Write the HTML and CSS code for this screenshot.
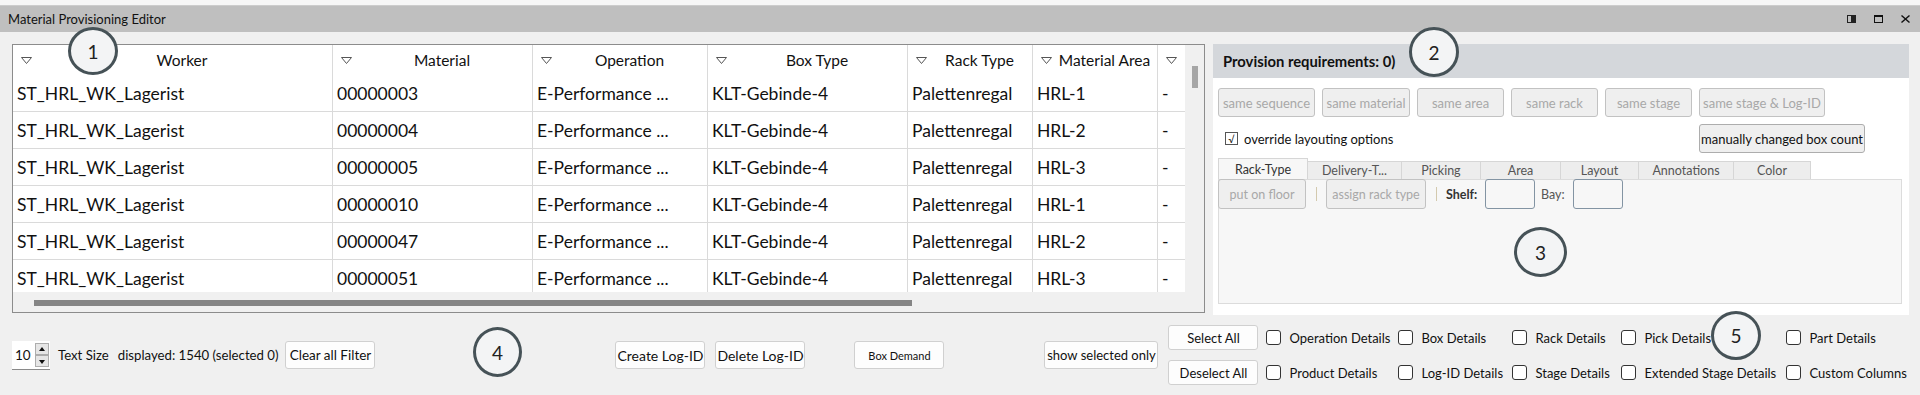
FILE: index.html
```html
<!DOCTYPE html>
<html lang="en">

<head>
    <meta charset="UTF-8">
    <title>Material Provisioning Editor</title>
    <link rel="stylesheet" href="styles.css">
</head>

<body>
    <div class="top-strip"></div>
    <div class="title-bar">
        <span class="title">Material Provisioning Editor</span>
        <div class="window-buttons">
            <svg width="9" height="8" viewBox="0 0 9 8"><rect x="0.5" y="0.5" width="8" height="7" fill="none" stroke="#222"/><rect x="4" y="0" width="5" height="8" fill="#222"/></svg>
            <svg width="9" height="8" viewBox="0 0 9 8"><rect x="0.5" y="1" width="8" height="6.5" fill="none" stroke="#111"/><rect x="0" y="0" width="9" height="2" fill="#111"/></svg>
            <svg width="9" height="8" viewBox="0 0 9 8"><path d="M0.5 0.5 L8.5 7.5 M8.5 0.5 L0.5 7.5" stroke="#111" stroke-width="1.4"/></svg>
        </div>
    </div>

    <div class="workspace">
        <div class="table-box">
            <div class="table-top">
                <div class="grid">
                    <div class="row head">
                        <div class="cell"><svg class="filter" width="11" height="7"><polygon points="0.5,0.5 10.5,0.5 5.5,6.5" /></svg><span>Worker</span></div>
                        <div class="cell"><svg class="filter" width="11" height="7"><polygon points="0.5,0.5 10.5,0.5 5.5,6.5" /></svg><span>Material</span></div>
                        <div class="cell"><svg class="filter" width="11" height="7"><polygon points="0.5,0.5 10.5,0.5 5.5,6.5" /></svg><span>Operation</span></div>
                        <div class="cell"><svg class="filter" width="11" height="7"><polygon points="0.5,0.5 10.5,0.5 5.5,6.5" /></svg><span>Box Type</span></div>
                        <div class="cell"><svg class="filter" width="11" height="7"><polygon points="0.5,0.5 10.5,0.5 5.5,6.5" /></svg><span>Rack Type</span></div>
                        <div class="cell"><svg class="filter" width="11" height="7"><polygon points="0.5,0.5 10.5,0.5 5.5,6.5" /></svg><span>Material Area</span></div>
                        <div class="cell"><svg class="filter" width="11" height="7"><polygon points="0.5,0.5 10.5,0.5 5.5,6.5" /></svg></div>
                    </div>
                    <div class="row">
                        <div class="cell">ST_HRL_WK_Lagerist</div><div class="cell">00000003</div><div class="cell">E-Performance ...</div><div class="cell">KLT-Gebinde-4</div><div class="cell">Palettenregal</div><div class="cell">HRL-1</div><div class="cell">-</div>
                    </div>
                    <div class="row">
                        <div class="cell">ST_HRL_WK_Lagerist</div><div class="cell">00000004</div><div class="cell">E-Performance ...</div><div class="cell">KLT-Gebinde-4</div><div class="cell">Palettenregal</div><div class="cell">HRL-2</div><div class="cell">-</div>
                    </div>
                    <div class="row">
                        <div class="cell">ST_HRL_WK_Lagerist</div><div class="cell">00000005</div><div class="cell">E-Performance ...</div><div class="cell">KLT-Gebinde-4</div><div class="cell">Palettenregal</div><div class="cell">HRL-3</div><div class="cell">-</div>
                    </div>
                    <div class="row">
                        <div class="cell">ST_HRL_WK_Lagerist</div><div class="cell">00000010</div><div class="cell">E-Performance ...</div><div class="cell">KLT-Gebinde-4</div><div class="cell">Palettenregal</div><div class="cell">HRL-1</div><div class="cell">-</div>
                    </div>
                    <div class="row">
                        <div class="cell">ST_HRL_WK_Lagerist</div><div class="cell">00000047</div><div class="cell">E-Performance ...</div><div class="cell">KLT-Gebinde-4</div><div class="cell">Palettenregal</div><div class="cell">HRL-2</div><div class="cell">-</div>
                    </div>
                    <div class="row">
                        <div class="cell">ST_HRL_WK_Lagerist</div><div class="cell">00000051</div><div class="cell">E-Performance ...</div><div class="cell">KLT-Gebinde-4</div><div class="cell">Palettenregal</div><div class="cell">HRL-3</div><div class="cell">-</div>
                    </div>
                </div>
                <div class="vscroll"><div class="vthumb"></div></div>
            </div>
            <div class="hscroll"><div class="hthumb"></div></div>
        </div>

        <div class="panel">
            <div class="panel-head">Provision requirements: 0)</div>
            <div class="panel-body">
                <div class="option-grid">
                    <button class="btn disabled">same sequence</button>
                    <button class="btn disabled">same material</button>
                    <button class="btn disabled">same area</button>
                    <button class="btn disabled">same rack</button>
                    <button class="btn disabled">same stage</button>
                    <button class="btn disabled last">same stage &amp; Log-ID</button>
                    <label class="check override"><span class="tick">&#x221A;</span>override layouting options</label>
                    <button class="btn box-count">manually changed box count</button>
                </div>
                <div class="tabs">
                    <div class="tab active" style="width: 90px">Rack-Type</div>
                    <div class="tab" style="width: 95px">Delivery-T...</div>
                    <div class="tab" style="width: 80px">Picking</div>
                    <div class="tab" style="width: 81px">Area</div>
                    <div class="tab" style="width: 79px">Layout</div>
                    <div class="tab" style="width: 96px">Annotations</div>
                    <div class="tab" style="width: 78px">Color</div>
                </div>
                <div class="tab-pane">
                    <div class="toolbar">
                        <button class="btn disabled floor">put on floor</button>
                        <span class="sep"></span>
                        <button class="btn disabled assign">assign rack type</button>
                        <span class="sep"></span>
                        <span class="shelf">Shelf:</span>
                        <input class="field" type="text">
                        <span class="bay">Bay:</span>
                        <input class="field" type="text">
                    </div>
                </div>
            </div>
        </div>
    </div>

    <div class="bottom">
        <div class="spinbox">
            <span class="spin-value">10</span>
            <div class="spin-arrows">
                <span class="arrow up"></span>
                <span class="arrow down"></span>
            </div>
        </div>
        <span class="size-label">Text Size</span>
        <span class="count-label">displayed: 1540 (selected 0)</span>
        <button class="btn light clear">Clear all Filter</button>
        <button class="btn light create">Create Log-ID</button>
        <button class="btn light delete">Delete Log-ID</button>
        <button class="btn light demand">Box Demand</button>
        <button class="btn light show">show selected only</button>
        <div class="select-col">
            <button class="btn light">Select All</button>
            <button class="btn light">Deselect All</button>
        </div>
        <div class="detail-grid">
            <label class="check"><span class="box"></span>Operation Details</label>
            <label class="check"><span class="box"></span>Box Details</label>
            <label class="check"><span class="box"></span>Rack Details</label>
            <label class="check"><span class="box"></span>Pick Details</label>
            <label class="check"><span class="box"></span>Part Details</label>
            <label class="check"><span class="box"></span>Product Details</label>
            <label class="check"><span class="box"></span>Log-ID Details</label>
            <label class="check"><span class="box"></span>Stage Details</label>
            <label class="check"><span class="box"></span>Extended Stage Details</label>
            <label class="check"><span class="box"></span>Custom Columns</label>
        </div>
    </div>

    <div class="marker m1">1</div>
    <div class="marker m2">2</div>
    <div class="marker m3">3</div>
    <div class="marker m4">4</div>
    <div class="marker m5">5</div>
</body>

</html>
```

FILE: styles.css
```css
body {
    margin: 0;
    width: 1920px;
    height: 395px;
    overflow: hidden;
    position: relative;
    background-color: #f0f0f0;
    font-family: 'Lato', 'Noto Sans', sans-serif;
    font-size: 13px;
    color: #111;
}

.top-strip {
    height: 5px;
    background-color: #f7f7f7;
    border-bottom: 1px solid #cdcdcd;
}

.title-bar {
    height: 26px;
    display: flex;
    align-items: center;
    padding: 0 10px 0 8px;
    background-color: #bfbfbf;
}

.title {
    flex: 1;
    font-size: 13px;
    color: #111;
}

.window-buttons {
    display: flex;
    align-items: center;
    gap: 18px;
}

.workspace {
    display: flex;
    align-items: flex-start;
    gap: 8px;
    height: 271px;
    padding: 12px 11px 0 12px;
}

/* table */
.table-box {
    width: 1193px;
    height: 269px;
    box-sizing: border-box;
    border: 1px solid #8c8c8c;
    display: flex;
    flex-direction: column;
    background-color: #f0f0f0;
}

.table-top {
    display: flex;
    height: 247px;
}

.grid {
    width: 1172px;
    overflow: hidden;
    background-color: #fff;
}

.row {
    display: grid;
    grid-template-columns: 320px 200px 175px 200px 125px 125px 27px;
    height: 37px;
    box-sizing: border-box;
    border-bottom: 1px solid #dadada;
    font-size: 17.5px;
}

.row.head {
    height: 30px;
    border-bottom: none;
    font-size: 15.5px;
}

.cell {
    display: flex;
    align-items: center;
    padding-left: 4px;
    border-right: 1px solid #dadada;
    white-space: nowrap;
    overflow: hidden;
}

.cell:last-child {
    border-right: none;
}

.head .cell {
    padding-left: 8px;
}

.head .cell span {
    flex: 1;
    text-align: center;
}

.filter polygon {
    fill: none;
    stroke: #555;
}

.vscroll {
    width: 19px;
}

.vthumb {
    width: 6px;
    height: 22px;
    margin: 21px 0 0 7px;
    background-color: #a6a6a6;
}

.hscroll {
    height: 20px;
}

.hthumb {
    width: 878px;
    height: 6px;
    margin: 8px 0 0 21px;
    background-color: #858585;
}

/* right panel */
.panel {
    width: 696px;
    height: 271px;
    background-color: #fff;
}

.panel-head {
    height: 34px;
    display: flex;
    align-items: center;
    padding-left: 10px;
    background-color: #d4d7db;
    font-size: 14.8px;
    font-weight: bold;
}

.panel-body {
    padding: 10px 7px 0 5px;
}

.option-grid {
    display: grid;
    grid-template-columns: 97px 88px 87px 87px 87px auto;
    grid-auto-rows: 29px;
    gap: 7px;
}

.btn {
    height: 29px;
    padding: 0;
    box-sizing: border-box;
    border: 1px solid #adadad;
    border-radius: 3px;
    background-color: #efefef;
    font-family: inherit;
    font-size: 13px;
    color: #111;
    white-space: nowrap;
}

.btn.disabled {
    color: #a8a8a8;
    border-color: #c2c2c2;
}

.btn.last {
    width: 126px;
}

.btn.box-count {
    width: 166px;
}

.check {
    display: flex;
    align-items: center;
    white-space: nowrap;
}

.override {
    grid-column: 1 / 6;
    padding-left: 7px;
}

.tick {
    width: 13px;
    height: 13px;
    box-sizing: border-box;
    margin-right: 6px;
    border: 1px solid #555;
    background-color: #fff;
    display: flex;
    align-items: center;
    justify-content: center;
    font-size: 10px;
}

.tabs {
    display: flex;
    align-items: flex-end;
    height: 21px;
    margin-top: 5px;
}

.tab {
    height: 18px;
    box-sizing: border-box;
    margin-right: -1px;
    display: flex;
    align-items: center;
    justify-content: center;
    border: 1px solid #d6d6d6;
    border-bottom: none;
    background-color: #ededed;
    font-size: 12.5px;
    color: #555;
}

.tab.active {
    height: 21px;
    background-color: #f7f7f7;
    color: #333;
}

.tab-pane {
    width: 684px;
    height: 125px;
    box-sizing: border-box;
    border: 1px solid #dcdcdc;
    background-color: #f7f7f7;
}

.toolbar {
    display: flex;
    align-items: center;
    height: 30px;
    margin: -1px 0 0 -1px;
}

.toolbar .btn {
    height: 30px;
    font-size: 12.5px;
}

.floor {
    width: 88px;
}

.assign {
    width: 100px;
}

.sep {
    width: 1px;
    height: 14px;
    margin: 0 9px 0 10px;
    background-color: #d3c9ae;
}

.shelf {
    width: 32px;
    margin-right: 7px;
    font-size: 12.5px;
    font-weight: bold;
    color: #333;
}

.bay {
    width: 25px;
    margin: 0 7px 0 6px;
    font-size: 12.5px;
    color: #555;
}

.field {
    width: 50px;
    height: 30px;
    box-sizing: border-box;
    border: 1px solid #8394a3;
    border-radius: 3px;
    background-color: transparent;
}

/* bottom bar */
.bottom {
    display: flex;
    align-items: center;
    height: 80px;
    padding-left: 12px;
    font-size: 13.2px;
}

.spinbox {
    width: 38px;
    height: 29px;
    box-sizing: border-box;
    display: flex;
    align-items: center;
    justify-content: space-between;
    background-color: #fff;
    border-bottom: 1px solid #8a8a8a;
}

.spin-value {
    padding-left: 3px;
    font-size: 13.5px;
}

.spin-arrows {
    display: flex;
    flex-direction: column;
    margin-right: 1px;
}

.arrow {
    width: 14px;
    height: 12px;
    box-sizing: border-box;
    border: 1px solid #adadad;
    background-color: #e6e6e6;
    position: relative;
}

.arrow::after {
    content: '';
    position: absolute;
    left: 3px;
    border-left: 3.5px solid transparent;
    border-right: 3.5px solid transparent;
}

.arrow.up::after {
    top: 3px;
    border-bottom: 4px solid #111;
}

.arrow.down::after {
    top: 4px;
    border-top: 4px solid #111;
}

.size-label {
    margin-left: 8px;
}

.count-label {
    margin-left: 9px;
}

.btn.light {
    width: 90px;
    height: 28px;
    border-color: #d0d0d0;
    background-color: #fdfdfd;
}

.btn.clear {
    margin-left: 7px;
    font-size: 13.5px;
}

.btn.create {
    margin-left: 240px;
    font-size: 14px;
}

.btn.delete {
    margin-left: 10px;
    font-size: 14px;
}

.btn.demand {
    margin-left: 49px;
    font-size: 11px;
}

.btn.show {
    width: 114px;
    margin-left: 100px;
}

.select-col {
    display: flex;
    flex-direction: column;
    gap: 10px;
    margin-left: 10px;
}

.select-col .btn {
    height: 25px;
}

.detail-grid {
    display: grid;
    grid-template-columns: 132px 114px 109px 165px auto;
    grid-auto-rows: 20px;
    row-gap: 15px;
    margin-left: 8px;
    font-size: 13px;
}

.box {
    width: 15px;
    height: 15px;
    box-sizing: border-box;
    margin-right: 8px;
    border: 1px solid #333;
    border-radius: 3px;
    background-color: #fff;
}

/* numbered callouts */
.marker {
    position: absolute;
    width: 50px;
    height: 50px;
    box-sizing: border-box;
    display: flex;
    align-items: center;
    justify-content: center;
    border: 3px solid #465257;
    border-radius: 50%;
    background-color: #f3f4f5;
    font-size: 19px;
    color: #222;
}

.m1 {
    left: 68px;
    top: 27px;
    height: 48px;
}

.m2 {
    left: 1409px;
    top: 27px;
}

.m3 {
    left: 1514px;
    top: 227px;
    width: 53px;
}

.m4 {
    left: 473px;
    top: 327px;
    width: 49px;
}

.m5 {
    left: 1711px;
    top: 311px;
    height: 49px;
}
```
